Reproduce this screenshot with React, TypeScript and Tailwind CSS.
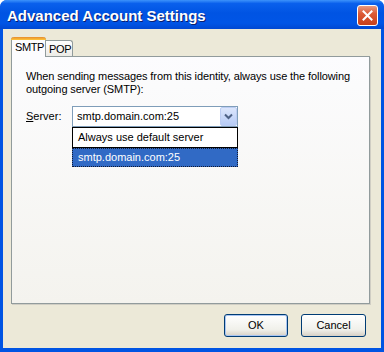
import React from "react";

const ChevronDown = () => (
  <svg width="9" height="7" viewBox="0 0 9 7">
    <path d="M1 1.5 L4.5 5 L8 1.5" stroke="#4d6185" strokeWidth="2" fill="none" />
  </svg>
);

const CloseIcon = () => (
  <svg width="11" height="11" viewBox="0 0 11 11">
    <path d="M1.5 1.5 L9.5 9.5 M9.5 1.5 L1.5 9.5" stroke="#ffffff" strokeWidth="2" strokeLinecap="square" fill="none" />
  </svg>
);

const App = () => {
  return (
    <div className="w-[384px] h-[352px] flex flex-col bg-[#0054e3] rounded-t-[7px] overflow-hidden font-['Liberation_Sans',Arial,sans-serif] text-[11px] text-black">
      {/* Barra de título */}
      <div className="h-[29px] flex items-center pl-[7px] pr-[6px] pt-[3px] bg-[linear-gradient(to_bottom,#3d93fb_0%,#0a60ec_12%,#0054e3_45%,#0055e6_80%,#0048d2_100%)]">
        <span className="text-white font-bold text-[15px] [text-shadow:1px_1px_0_#0a1e6e]">
          Advanced Account Settings
        </span>
        <button className="ml-auto -mt-[1px] w-[21px] h-[21px] rounded-[3px] border border-white flex items-center justify-center bg-[linear-gradient(to_bottom,#e89a80_0%,#dc5a36_40%,#c8401a_100%)]">
          <CloseIcon />
        </button>
      </div>

      {/* Corpo do diálogo */}
      <div className="flex-1 mx-[3px] mb-[4px] bg-[#ece9d8] flex flex-col pt-[8px] pl-[8px] pr-[11px]">
        {/* Abas */}
        <div className="flex items-end h-[19px]">
          <div className="relative z-10 w-[35px] h-[20px] -mb-[1px] bg-[#fcfcfe] border-x border-[#919b9c] rounded-t-[3px] flex flex-col">
            <div className="h-[3px] -mx-[1px] rounded-t-[3px] bg-[linear-gradient(to_bottom,#e68b2c,#ffc73c)]" />
            <span className="pl-[3px] pt-[1px] leading-[13px] tracking-[-0.4px]">SMTP</span>
          </div>
          <div className="w-[27px] h-[16px] bg-[linear-gradient(to_bottom,#ffffff,#ecebe6)] border-t border-r border-[#919b9c] rounded-tr-[3px] flex items-center pl-[3px] pt-[2px] tracking-[-0.3px]">
            POP
          </div>
        </div>

        {/* Painel */}
        <div className="h-[248px] border border-[#919b9c] bg-[linear-gradient(to_bottom,#fcfcfe,#f4f3ee)] shadow-[1px_1px_0_#d0cec4] px-[14px] pt-[13px]">
          <p className="leading-[13px] whitespace-nowrap tracking-[-0.1px]">
            When sending messages from this identity, always use the following
            <br />
            outgoing server (SMTP):
          </p>

          <div className="mt-[10px] flex items-center">
            <label className="w-[46px]">
              <span className="underline">S</span>erver:
            </label>
            <div className="relative w-[166px]">
              <div className="h-[21px] border border-[#7f9db9] bg-white flex items-center pl-[4px]">
                <span className="flex-1">smtp.domain.com:25</span>
                <div className="w-[17px] h-[19px] rounded-[2px] border border-[#bccdf3] bg-[linear-gradient(to_bottom,#dce6fc,#b7cbf6)] flex items-center justify-center">
                  <ChevronDown />
                </div>
              </div>

              {/* Lista aberta */}
              <div className="absolute left-0 top-full w-[166px] z-20">
                <div className="h-[21px] border border-black bg-white flex items-center pl-[5px]">
                  Always use default server
                </div>
                <div className="h-[19px] border border-dotted border-[#111a33] bg-[#316ac5] text-white flex items-center pl-[5px]">
                  smtp.domain.com:25
                </div>
              </div>
            </div>
          </div>
        </div>

        {/* Botões */}
        <div className="flex justify-end gap-[13px] mt-[10px] pr-[4px]">
          <button className="w-[64px] h-[23px] rounded-[3px] border border-[#003c74] bg-[linear-gradient(to_bottom,#ffffff,#f0f0ea_70%,#d6d0c5)] shadow-[inset_0_0_0_1px_#a9c5f2] text-[11px]">
            OK
          </button>
          <button className="w-[65px] h-[23px] rounded-[3px] border border-[#003c74] bg-[linear-gradient(to_bottom,#ffffff,#f0f0ea_70%,#d6d0c5)] text-[11px]">
            Cancel
          </button>
        </div>
      </div>
    </div>
  );
};

export default App;
